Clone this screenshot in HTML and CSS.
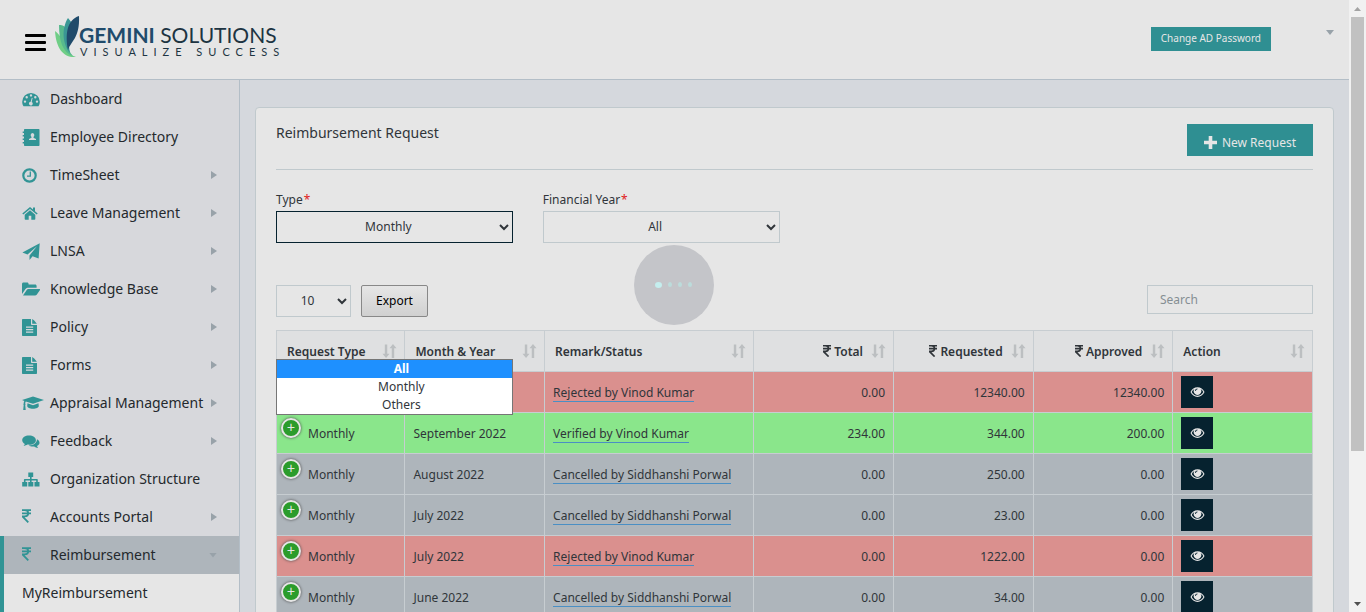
FILE: index.html
```html
<!DOCTYPE html>
<html lang="en">
<head>
<meta charset="utf-8">
<title>Reimbursement Request</title>
<link rel="stylesheet" href="styles.css">
</head>
<body>
<svg class="sprite" aria-hidden="true">
  <symbol id="i-rupee" viewBox="1 1 10 15"><path d="M1 2h10M1 5.500h10M1 2h3c5.200 0 5.200 7 0 7H1.500l6.500 6.500" fill="none" stroke="currentColor" stroke-width="2"/></symbol>
  <symbol id="i-sort" viewBox="0 0 16 16"><path d="M3 1h2.600v10H8L4.300 15.500.500 11H3zM10.400 15.500H13V5h2.500L11.700.500 8 5h2.400z" fill="currentColor"/></symbol>
  <symbol id="i-eye" viewBox="0 0 16 12"><path fill="currentColor" fill-rule="evenodd" d="M8 .800C4.700.800 2 2.700.500 6 2 9.300 4.700 11.200 8 11.200S14 9.300 15.500 6C14 2.700 11.300.800 8 .800zM8 10C5.300 10 3.100 8.500 1.800 6c.700-1.400 1.700-2.500 2.900-3.200a4 4 0 1 0 6.600 0c1.200.700 2.200 1.800 2.900 3.200C12.900 8.500 10.700 10 8 10zM8 2.200a2.600 2.600 0 0 0-2.600 2.600h.900A1.700 1.700 0 0 1 8 3.100z"/></symbol>
  <symbol id="i-doc" viewBox="0 0 15 17"><path fill="currentColor" fill-rule="evenodd" d="M1 0h8v5.200c0 .500.300.800.800.800H15v10c0 .600-.400 1-1 1H1c-.600 0-1-.400-1-1V1c0-.600.400-1 1-1zM10.200 0c.800.200 4.400 3.800 4.600 4.800h-4.600zM4 7.500v1.200h7.200V7.500zm0 2.500v1.200h7.200V10zm0 2.500v1.200h7.200v-1.200z"/></symbol>
</svg>
<div class="shell">
<div class="app">
  <header class="topbar">
    <button class="burger" aria-label="Toggle menu"><span></span><span></span><span></span></button>
    <svg class="logo" viewBox="0 0 230 46" role="img" aria-label="Gemini Solutions">
      <path d="M0 14C1 32 9 41 21 40 12 37 8 30 7 22 5 19 3 16 0 14z" fill="#6fce86"/>
      <path d="M4 8C4 24 8 36 18 39 12 33 11 22 12 12 9 8 6 8 4 8z" fill="#57b98d"/>
      <path d="M13 1C6 12 8 28 15 36 13 26 14 15 17 6z" fill="#3a9795"/>
      <path d="M24-1C12 3 10 17 13 33 16 24 25 21 24-1z" fill="#204b6b"/>
      <text x="24" y="26" class="logo-name"><tspan class="logo-strong">GEMINI</tspan> SOLUTIONS</text>
      <text x="25" y="39" class="logo-tag">VISUALIZE SUCCESS</text>
    </svg>
    <button class="password">Change AD Password</button>
    <button class="user" aria-label="User menu"></button>
  </header>
  <div class="body">
    <nav class="sidebar">
      <a class="item" href="#"><svg class="ico" viewBox="0 0 18 17"><path fill="currentColor" fill-rule="evenodd" d="M9 2a8.800 8.800 0 0 0-8.800 8.800c0 1.700.500 3.300 1.300 4.500h15c.8-1.200 1.300-2.800 1.300-4.500A8.800 8.800 0 0 0 9 2zM9 3.200a1.200 1.200 0 1 1 0 2.400 1.200 1.200 0 0 1 0-2.400zM4.700 5a1.200 1.200 0 1 1 0 2.400 1.200 1.200 0 0 1 0-2.400zM13.300 5a1.200 1.200 0 1 1 0 2.400 1.200 1.200 0 0 1 0-2.400zM3 9.400a1.200 1.200 0 1 1 0 2.400 1.200 1.200 0 0 1 0-2.400zM15 9.400a1.200 1.200 0 1 1 0 2.400 1.200 1.200 0 0 1 0-2.400zM9.800 6.700l.8.200-.9 4a1.900 1.900 0 1 1-1-.2z"/></svg><span>Dashboard</span></a>
      <a class="item" href="#"><svg class="ico" viewBox="0 0 18 17"><path fill="currentColor" fill-rule="evenodd" d="M3 0h13.500c.6 0 1 .4 1 1v15c0 .6-.4 1-1 1H3c-.6 0-1-.4-1-1v-1.500H.7V13H2v-2H.7V9.500H2v-2H.7V6H2V4H.7V2.500H2V1c0-.6.400-1 1-1zM10.500 4a1.900 2.200 0 0 1 1 4v.8l2.500 1.300v1H7v-1l2.500-1.300V8a1.900 2.200 0 0 1 1-4z"/></svg><span>Employee Directory</span></a>
      <a class="item" href="#"><svg class="ico" viewBox="0 0 18 17"><g fill="none" stroke="currentColor"><circle cx="7.500" cy="8.500" r="6.200" stroke-width="2.200"/><path d="M8.300 4.500v4.600H5" stroke-width="1.300"/></g></svg><span>TimeSheet</span><i class="arrow"></i></a>
      <a class="item" href="#"><svg class="ico" viewBox="0 0 18 17"><path fill="currentColor" d="M8 2 .3 8.500l1 1L8 4l6.700 5.500 1-1L13 6.200V2.500h-2v2zM2.700 9.700V14c0 .5.300.8.800.8h3.200v-4h2.600v4h3.200c.5 0 .8-.3.800-.8V9.700L8 5.300z"/></svg><span>Leave Management</span><i class="arrow"></i></a>
      <a class="item" href="#"><svg class="ico" viewBox="0 0 18 17"><path fill="currentColor" d="M17.700.2 16.600 15.500l-6-2.300L7.500 17v-4.500L15 3.200 5.500 11.500.4 9.500z"/></svg><span>LNSA</span><i class="arrow"></i></a>
      <a class="item" href="#"><svg class="ico" viewBox="0 0 18 17"><path fill="currentColor" d="M0 13V3c0-1 .6-1.600 1.500-1.600h3.600c.9 0 1.500.6 1.500 1.600v.5h6.500c.9 0 1.500.6 1.500 1.500v1.700H6.200c-1 0-2 .5-2.700 1.400zM1 14.500l3.700-5.600c.4-.6 1-.9 1.700-.9h11c.6 0 .9.400.6 1l-3.300 4.700c-.4.500-1 .8-1.600.8z"/></svg><span>Knowledge Base</span><i class="arrow"></i></a>
      <a class="item" href="#"><svg class="ico ico-doc"><use href="#i-doc"/></svg><span>Policy</span><i class="arrow"></i></a>
      <a class="item" href="#"><svg class="ico ico-doc"><use href="#i-doc"/></svg><span>Forms</span><i class="arrow"></i></a>
      <a class="item" href="#"><svg class="ico ico-cap" viewBox="0 0 22 17"><path fill="currentColor" d="M11 1.500 0 5l2.300.9C1.800 6.700 1.700 7.500 1.700 8.400c-.5.500-.5 1 0 1.500L1.200 15h2.500l-.5-5.100c.5-.5.500-1 0-1.500 0-.8.2-1.400.6-2L11 8.700 22 5zM5.500 8.300 5.200 11c0 1.500 2.600 2.700 5.800 2.700s5.800-1.200 5.800-2.700l-.3-2.700L11 10.200z"/></svg><span>Appraisal Management</span><i class="arrow"></i></a>
      <a class="item" href="#"><svg class="ico" viewBox="0 0 18 17"><path fill="currentColor" d="M7 2.500c-3.800 0-6.800 2-6.800 4.700 0 1.500 1 2.900 2.600 3.700-.3.900-.8 1.500-1.300 2 1.600-.1 3-.7 4-1.300 5 .6 8.400-1.700 8.400-4.400 0-2.700-3-4.700-6.900-4.700zM15 6.300c0 3.700-3.700 6.300-8.300 6.200 1.300.9 3.400 1.300 5.500 1 1 .7 2.300 1.300 4 1.400-.6-.5-1-1-1.200-1.900 3.400-1.700 3.300-5 0-6.700z"/></svg><span>Feedback</span><i class="arrow"></i></a>
      <a class="item" href="#"><svg class="ico" viewBox="0 0 18 17"><path fill="currentColor" d="M6.300 1.500h4.900V6H9.600v1.900H15c.5 0 .8.300.8.800V11h1.700v4.500h-5V11h1.700V9.400H9.600V11h1.700v4.500h-5V11H8V9.400H3.500V11h1.700v4.500H.2V11h1.700V8.700c0-.5.300-.8.800-.8H8V6H6.300z"/></svg><span>Organization Structure</span></a>
      <a class="item" href="#"><svg class="ico ico-rupee"><use href="#i-rupee"/></svg><span>Accounts Portal</span><i class="arrow"></i></a>
      <div class="group">
        <a class="item active" href="#"><svg class="ico ico-rupee"><use href="#i-rupee"/></svg><span>Reimbursement</span><i class="arrow down"></i></a>
        <a class="sub" href="#">MyReimbursement</a>
      </div>
    </nav>
    <main class="content">
      <section class="card">
        <div class="card-head">
          <h1>Reimbursement Request</h1>
          <button class="new"><svg viewBox="0 0 13 13"><path d="M4.700 0h3.600v4.700H13v3.600H8.300V13H4.700V8.300H0V4.700h4.700z" fill="currentColor"/></svg>New Request</button>
        </div>
        <div class="filters">
          <div class="field">
            <label for="type">Type<b class="req">*</b></label>
            <select id="type" class="focused"><option>Monthly</option><option>All</option><option>Others</option></select>
            <ul class="menu" role="listbox"><li class="picked" role="option">All</li><li role="option">Monthly</li><li role="option">Others</li></ul>
          </div>
          <div class="field">
            <label for="year">Financial Year<b class="req">*</b></label>
            <select id="year"><option>All</option></select>
          </div>
        </div>
        <div class="tools">
          <select class="length" aria-label="Rows per page"><option>10</option></select>
          <button class="export">Export</button>
          <input class="search" type="search" placeholder="Search" aria-label="Search">
        </div>
        <table>
          <colgroup><col class="c-type"><col class="c-mid"><col class="c-status"><col class="c-mid"><col class="c-mid"><col class="c-mid"><col class="c-mid"></colgroup>
          <thead><tr>
            <th><div>Request Type<svg class="sort"><use href="#i-sort"/></svg></div></th>
            <th><div>Month &amp; Year<svg class="sort"><use href="#i-sort"/></svg></div></th>
            <th><div>Remark/Status<svg class="sort"><use href="#i-sort"/></svg></div></th>
            <th class="num"><div><svg class="rs"><use href="#i-rupee"/></svg>Total<svg class="sort"><use href="#i-sort"/></svg></div></th>
            <th class="num"><div><svg class="rs"><use href="#i-rupee"/></svg>Requested<svg class="sort"><use href="#i-sort"/></svg></div></th>
            <th class="num"><div><svg class="rs"><use href="#i-rupee"/></svg>Approved<svg class="sort"><use href="#i-sort"/></svg></div></th>
            <th><div>Action<svg class="sort"><use href="#i-sort"/></svg></div></th>
          </tr></thead>
          <tbody>
            <tr class="rejected"><td><div class="kind"><button class="plus" aria-label="Expand">+</button>Monthly</div></td><td>October 2022</td><td><a href="#">Rejected by Vinod Kumar</a></td><td class="num">0.00</td><td class="num">12340.00</td><td class="num">12340.00</td><td><button class="view" aria-label="View"><svg><use href="#i-eye"/></svg></button></td></tr>
            <tr class="verified"><td><div class="kind"><button class="plus" aria-label="Expand">+</button>Monthly</div></td><td>September 2022</td><td><a href="#">Verified by Vinod Kumar</a></td><td class="num">234.00</td><td class="num">344.00</td><td class="num">200.00</td><td><button class="view" aria-label="View"><svg><use href="#i-eye"/></svg></button></td></tr>
            <tr><td><div class="kind"><button class="plus" aria-label="Expand">+</button>Monthly</div></td><td>August 2022</td><td><a href="#">Cancelled by Siddhanshi Porwal</a></td><td class="num">0.00</td><td class="num">250.00</td><td class="num">0.00</td><td><button class="view" aria-label="View"><svg><use href="#i-eye"/></svg></button></td></tr>
            <tr><td><div class="kind"><button class="plus" aria-label="Expand">+</button>Monthly</div></td><td>July 2022</td><td><a href="#">Cancelled by Siddhanshi Porwal</a></td><td class="num">0.00</td><td class="num">23.00</td><td class="num">0.00</td><td><button class="view" aria-label="View"><svg><use href="#i-eye"/></svg></button></td></tr>
            <tr class="rejected"><td><div class="kind"><button class="plus" aria-label="Expand">+</button>Monthly</div></td><td>July 2022</td><td><a href="#">Rejected by Vinod Kumar</a></td><td class="num">0.00</td><td class="num">1222.00</td><td class="num">0.00</td><td><button class="view" aria-label="View"><svg><use href="#i-eye"/></svg></button></td></tr>
            <tr><td><div class="kind"><button class="plus" aria-label="Expand">+</button>Monthly</div></td><td>June 2022</td><td><a href="#">Cancelled by Siddhanshi Porwal</a></td><td class="num">0.00</td><td class="num">34.00</td><td class="num">0.00</td><td><button class="view" aria-label="View"><svg><use href="#i-eye"/></svg></button></td></tr>
          </tbody>
        </table>
      </section>
    </main>
  </div>
  <div class="loader" role="status" aria-label="Loading"><span class="big"></span><span></span><span></span><span></span></div>
</div>
<div class="scroll" aria-hidden="true"><i class="up"></i><span class="track"><span class="thumb"></span></span><i class="dn"></i></div>
</div>
</body>
</html>
```
FILE: styles.css
```css
* { box-sizing: border-box; }
body { margin: 0; font-family: "Noto Sans", sans-serif; font-size: 12px; color: #30353a; background: #d5d8dd; }
button, select, input { font: inherit; color: inherit; margin: 0; border-radius: 0; }
a { color: inherit; text-decoration: none; }
.sprite { display: none; }
.shell { display: grid; grid-template-columns: minmax(0, 1fr) 17px; height: 100vh; overflow: hidden; }
.app { position: relative; display: flex; flex-direction: column; min-height: 0; overflow: hidden; }

.topbar { display: flex; flex: none; align-items: center; height: 80px; padding: 0 15px 0 25px; background: #e6e6e6; border-bottom: 1px solid #b3bec7; }
.burger { display: flex; flex-direction: column; gap: 4px; width: 21px; margin-top: 5px; padding: 0; border: 0; background: none; }
.burger span { height: 3px; background: #000; border-radius: 1px; }
.logo { width: 230px; height: 46px; margin-left: 9px; overflow: visible; }
.logo-name { font: 400 21px Lato, sans-serif; fill: #1d3442; }
.logo-strong { font-weight: 700; fill: #204b6b; }
.logo-tag { font: 400 11px Lato, sans-serif; letter-spacing: 6px; fill: #1d3442; }
.password { height: 24px; margin: 0 0 2px auto; padding: 0 10px 1px; border: 0; background: #2f8f92; color: #e6e6e6; font-size: 10px; }
.user { width: 8px; height: 5px; margin: 0 0 14px 55px; padding: 0; border: 0; background: #98a2a9; clip-path: polygon(0 0, 100% 0, 50% 100%); }

.body { display: flex; flex: 1; min-height: 0; }
.sidebar { flex: none; width: 240px; background: #d7d8dc; border-right: 1px solid #b3bec7; font-size: 14px; color: #24292d; }
.item { display: flex; align-items: center; height: 38px; padding: 0 22px; white-space: nowrap; }
.item span { padding-bottom: 2px; }
.ico { width: 18px; height: 17px; margin-right: 10px; color: #319495; }
.ico-doc { width: 15px; margin-right: 13px; }
.ico-cap { width: 22px; margin-right: 6px; }
.ico-rupee { width: 9px; height: 14px; margin: 0 19px 2px 0; }
.arrow { width: 6px; height: 8px; margin-left: auto; background: #98a2a9; clip-path: polygon(0 0, 100% 50%, 0 100%); }
.arrow.down { width: 8px; height: 5px; clip-path: polygon(0 0, 100% 0, 50% 100%); }
.group { border-left: 4px solid #319495; background: #e6e6e6; }
.active { padding-left: 18px; background: #aeb5bb; }
.sub { display: flex; align-items: center; height: 38px; padding: 0 0 2px 18px; }

.content { flex: 1; min-width: 0; padding: 27px 15px 0; }
.card { padding: 16px 20px; background: #e6e6e6; border: 1px solid #c0c9cd; border-radius: 4px; }
.card-head { display: flex; justify-content: space-between; align-items: flex-start; height: 46px; border-bottom: 1px solid #c0c9cd; }
h1 { margin: 0; font-size: 14px; line-height: 18px; font-weight: 400; }
.new { display: flex; align-items: center; gap: 5px; height: 32px; padding: 4px 17px 0; border: 0; background: #2f8f92; color: #e6e6e6; }
.new svg { width: 13px; height: 13px; }
.filters { display: grid; grid-template-columns: repeat(4, minmax(0, 1fr)); gap: 30px; padding-top: 21px; }
.field { position: relative; display: flex; flex-direction: column; }
label { line-height: 18px; margin-bottom: 2px; }
.req { color: #e02020; font-weight: 400; margin-left: 1px; }
select { height: 32px; padding-bottom: 2px; border: 1px solid #c0c9cd; background: #e6e6e6; text-align-last: center; }
.focused { border-color: #06222f; outline: 0; }
.menu { position: absolute; z-index: 2; top: 168px; left: 0; right: 0; margin: 0; padding: 0; list-style: none; background: #fff; border: 1px solid #767676; text-align: center; }
.menu li { height: 18px; line-height: 18px; padding-left: 14px; }
.menu .picked { background: #1e90ff; color: #fff; font-weight: 700; }
.tools { display: flex; align-items: flex-start; gap: 10px; margin: 42px 0 13px; }
.length { width: 75px; }
.export { height: 32px; padding: 0 14px 2px; border: 1px solid #888; border-radius: 2px; background: linear-gradient(#e6e6e6, #d0d0d0); color: #000; }
.search { width: 166px; height: 29px; margin-left: auto; padding: 0 12px; border: 1px solid #c0c9cd; background: #e6e6e6; outline: 0; }
.search::placeholder { color: #858e93; }

table { width: 100%; table-layout: fixed; border-collapse: collapse; }
.c-type { width: 12.4%; }
.c-status { width: 20.2%; }
.c-mid { width: 13.48%; }
th, td { height: 41px; padding: 0 8px; border: 1px solid #c7cdd1; text-align: left; white-space: nowrap; }
th { padding: 0 7px 0 10px; background: #dfe0e1; font-weight: 600; }
th div { display: flex; align-items: center; }
th.num div { justify-content: flex-end; }
.sort { width: 15px; height: 16px; margin-left: auto; color: #bcbfc1; }
th.num .sort { margin-left: 8px; }
.rs { width: 8px; height: 12px; margin-right: 3px; }
td { background: #aeb5bb; }
.rejected td { background: #da908e; }
.verified td { background: #8ae68b; }
td.num { text-align: right; }
td a { border-bottom: 1px solid #4a8fc4; }
.kind { display: flex; align-items: center; gap: 7px; margin-left: -4px; }
.plus { width: 20px; height: 20px; margin-bottom: 10px; padding: 0; border: 2px solid #e6e6e6; border-radius: 50%; box-shadow: 0 0 3px #444; background: #2b9c2b; color: #e6e6e6; font: 14px/16px "Liberation Mono", monospace; }
.view { display: grid; place-items: center; width: 32px; height: 32px; padding: 0; border: 0; background: #06222f; color: #e6e6e6; }
.view svg { width: 15px; height: 12px; }

.loader { position: absolute; z-index: 3; top: 40vh; left: 50%; display: flex; align-items: center; justify-content: center; gap: 6px; width: 80px; height: 80px; margin-left: -41px; border-radius: 50%; background: #c4c5c9; }
.loader span { width: 4px; height: 5px; border-radius: 50%; background: #bcdcdb; }
.loader .big { width: 7px; height: 6px; background: #c4eeee; }

.scroll { display: flex; flex-direction: column; align-items: center; background: #f1f1f1; }
.scroll i { flex: none; width: 7px; height: 4px; margin: 7px 0 6px; background: #a3a3a3; clip-path: polygon(50% 0, 100% 100%, 0 100%); }
.scroll .dn { background: #505050; clip-path: polygon(0 0, 100% 0, 50% 100%); }
.track { flex: 1; width: 13px; }
.thumb { display: block; height: 75%; background: #c1c1c1; }
```
